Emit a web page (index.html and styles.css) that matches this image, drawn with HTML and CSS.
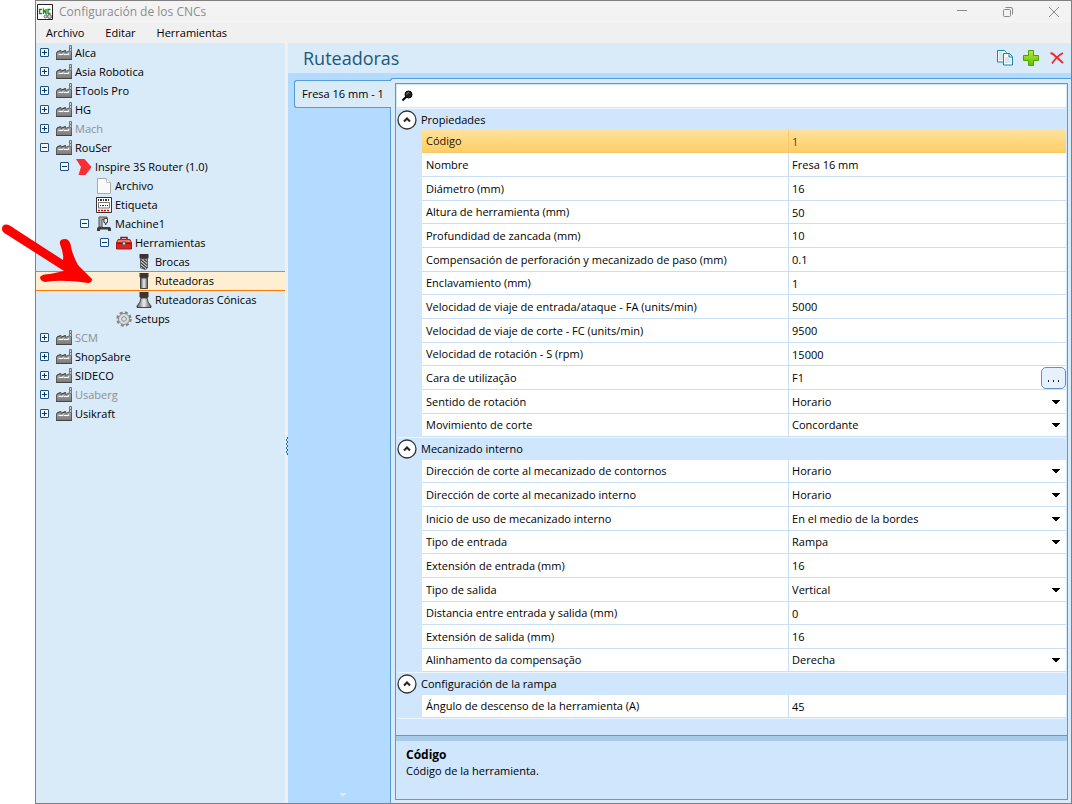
FILE: index.html
```html
<!DOCTYPE html>
<html lang="es">
<head>
<meta charset="utf-8">
<title>Configuración de los CNCs</title>
<link rel="stylesheet" href="styles.css">
</head>
<body>
<svg class="defs" aria-hidden="true">
  <defs>
    <linearGradient id="steel" x1="0" x2="1" y1="0" y2="0"><stop offset="0" stop-color="#555"/><stop offset=".5" stop-color="#eee"/><stop offset="1" stop-color="#555"/></linearGradient>
    <linearGradient id="wall" x1="0" x2="0" y1="0" y2="1"><stop offset="0" stop-color="#aaa"/><stop offset="1" stop-color="#777"/></linearGradient>
    <linearGradient id="green" x1="0" x2="0" y1="0" y2="1"><stop offset="0" stop-color="#b4ea3c"/><stop offset="1" stop-color="#62bd00"/></linearGradient>
    <symbol id="factory" viewBox="0 0 16 16"><path d="M.5 14.500V7.500L5 5.500V7.500L9.500 5.500V7.500L13 6h2.500v8.500z" fill="url(#wall)" stroke="#5a5a5a"/><path d="M13.500.5h2v6h-2z" fill="#ccc" stroke="#777"/><path d="M13 3.500h3" stroke="#777"/><path d="M1 7l3.500-1.500M5.500 7l4-1.500" stroke="#444"/><path d="M2.500 9.500h4l1-1M8 9.500h4l1-1" fill="none" stroke="#fff" stroke-width="1.200"/><path d="M0 14.500h16" stroke="#444"/></symbol>
    <symbol id="chevron" viewBox="0 0 16 16"><path d="M0 0h8.500L15.500 8l-6 8H2.500L5 8z" fill="#fb2c36"/></symbol>
    <symbol id="page" viewBox="0 0 16 16"><path d="M1.500.5h9l4 4v11h-13z" fill="#fafafa" stroke="#aaa"/><path d="M10.500.5v4h4" fill="#fff" stroke="#bbb"/></symbol>
    <symbol id="tag" viewBox="0 0 16 16"><path d="M.5.5h15v15H.5z" fill="#fff" stroke="#333"/><path d="M2 3h12" stroke="#333" stroke-width="2" stroke-dasharray="1 1 2 1"/><path d="M2.500 5.500h11v5.500h-11z" fill="none" stroke="#777"/><path d="M4 8.500h8" stroke="#222" stroke-dasharray="1 1 2 1"/><path d="M2 13.500h12" stroke="#e00" stroke-width="1.500" stroke-dasharray="2 1"/></symbol>
    <symbol id="machine" viewBox="0 0 16 16"><path d="M3 1h8v5H8V3.500H6V11H3z" fill="#aaa" stroke="#555"/><path d="M8 2.500h3.500v4h-1L9.700 9 9 6.500H8z" fill="#eee" stroke="#444"/><path d="M2 11h12l1 1.500V15h-3v-1.500H4V15H1v-2.500z" fill="#3c3c3c"/></symbol>
    <symbol id="toolbox" viewBox="0 0 16 16"><path d="M5 5V2.500h6V5" fill="none" stroke="#8f1515" stroke-width="1.500"/><path d="M2 4.500h12l1.500 3.500H.5z" fill="#f4796b" stroke="#b32020"/><path d="M.5 8h15v6H.5z" fill="#da2424" stroke="#a61616"/><path d="M1 8.500h14" stroke="#811"/><path d="M6.500 7h3v3h-3z" fill="#ddd" stroke="#555"/></symbol>
    <symbol id="drill" viewBox="0 0 16 16"><path d="M3.500 0h9v4l-1 1h-7l-1-1z" fill="#3a3434"/><path d="M4.500 5h7v9l-2 1.500-5-1.500z" fill="#d2d2d2" stroke="#666"/><path d="M5 6l6 5M5 9l6 5M8 5.500l3 2.500M5 12l4 3" stroke="#444" stroke-width="1.300"/></symbol>
    <symbol id="router" viewBox="0 0 16 16"><path d="M3.500 0h9v4l-1 1h-7l-1-1z" fill="#3a3434"/><path d="M4.500 5h7v10.500h-7z" fill="url(#steel)" stroke="#444"/></symbol>
    <symbol id="cone" viewBox="0 0 16 16"><path d="M3.500 0h9v5l-1 1h-7l-1-1z" fill="#3a3434"/><path d="M5 6h6l1 4 3 4v1.500H1V14l3-4z" fill="url(#steel)" stroke="#444"/></symbol>
    <symbol id="gear" viewBox="0 0 16 16"><circle cx="8" cy="8" r="6.500" fill="none" stroke="#858585" stroke-width="2.500" stroke-dasharray="2.900 2.205"/><circle cx="8" cy="8" r="5.500" fill="#ddd" stroke="#8a8a8a"/><circle cx="8" cy="8" r="2.300" fill="#d9eaf8" stroke="#888"/></symbol>
    <symbol id="up" viewBox="0 0 20 20"><circle cx="10" cy="10" r="9" fill="#fff" stroke="#333" stroke-width="1.300"/><path d="M7 11.500l3-3 3 3" fill="none" stroke="#222" stroke-width="2"/></symbol>
  </defs>
</svg>

<div class="window">
  <header class="titlebar">
    <svg class="app-icon" viewBox="0 0 16 16" aria-hidden="true"><path d="M.5.5h15v15H.5z" fill="#fff" stroke="#222"/><path d="M5 5.500H2.500v4H5M6.500 10V5.500l2.500 4V5M13.500 5.500H11v4h2.500" fill="none" stroke="#138a13" stroke-width="1.300"/><circle cx="8.500" cy="12.500" r="1.500" fill="#ccc" stroke="#777"/><circle cx="12.500" cy="12.500" r="2" fill="#ccc" stroke="#666"/></svg>
    <h1>Configuración de los CNCs</h1>
    <div class="caption">
      <button aria-label="Minimizar"><svg viewBox="0 0 12 12"><path d="M1 4.500h10"/></svg></button>
      <button aria-label="Restaurar"><svg viewBox="0 0 12 12"><rect x="1.500" y="3.500" width="7" height="7" rx="1"/><path d="M3.500 1.500H9Q10.500 1.500 10.500 3V8.500"/></svg></button>
      <button aria-label="Cerrar"><svg viewBox="0 0 12 12"><path d="M1 1l10 10M11 1L1 11"/></svg></button>
    </div>
  </header>
  <nav class="menubar"><button>Archivo</button><button>Editar</button><button>Herramientas</button></nav>

  <div class="body">
    <nav class="tree" aria-label="Fabricantes">
      <ul>
        <li class="node"><button class="toggle plus" aria-label="Expandir"></button><svg><use href="#factory"/></svg><a href="#">Alca</a></li>
        <li class="node"><button class="toggle plus" aria-label="Expandir"></button><svg><use href="#factory"/></svg><a href="#">Asia Robotica</a></li>
        <li class="node"><button class="toggle plus" aria-label="Expandir"></button><svg><use href="#factory"/></svg><a href="#">ETools Pro</a></li>
        <li class="node"><button class="toggle plus" aria-label="Expandir"></button><svg><use href="#factory"/></svg><a href="#">HG</a></li>
        <li class="node off"><button class="toggle plus" aria-label="Expandir"></button><svg><use href="#factory"/></svg><a href="#">Mach</a></li>
        <li class="node"><button class="toggle" aria-label="Contraer"></button><svg><use href="#factory"/></svg><a href="#">RouSer</a></li>
        <li class="node l1"><button class="toggle" aria-label="Contraer"></button><svg><use href="#chevron"/></svg><a href="#">Inspire 3S Router (1.0)</a></li>
        <li class="node l2"><span class="toggle-space"></span><svg><use href="#page"/></svg><a href="#">Archivo</a></li>
        <li class="node l2"><span class="toggle-space"></span><svg><use href="#tag"/></svg><a href="#">Etiqueta</a></li>
        <li class="node l2"><button class="toggle" aria-label="Contraer"></button><svg><use href="#machine"/></svg><a href="#">Machine1</a></li>
        <li class="node l3"><button class="toggle" aria-label="Contraer"></button><svg><use href="#toolbox"/></svg><a href="#">Herramientas</a></li>
        <li class="node l4"><span class="toggle-space"></span><svg><use href="#drill"/></svg><a href="#">Brocas</a></li>
        <li class="node l4 selected"><span class="toggle-space"></span><svg><use href="#router"/></svg><a href="#">Ruteadoras</a></li>
        <li class="node l4"><span class="toggle-space"></span><svg><use href="#cone"/></svg><a href="#">Ruteadoras Cónicas</a></li>
        <li class="node l3"><span class="toggle-space"></span><svg><use href="#gear"/></svg><a href="#">Setups</a></li>
        <li class="node off"><button class="toggle plus" aria-label="Expandir"></button><svg><use href="#factory"/></svg><a href="#">SCM</a></li>
        <li class="node"><button class="toggle plus" aria-label="Expandir"></button><svg><use href="#factory"/></svg><a href="#">ShopSabre</a></li>
        <li class="node"><button class="toggle plus" aria-label="Expandir"></button><svg><use href="#factory"/></svg><a href="#">SIDECO</a></li>
        <li class="node off"><button class="toggle plus" aria-label="Expandir"></button><svg><use href="#factory"/></svg><a href="#">Usaberg</a></li>
        <li class="node"><button class="toggle plus" aria-label="Expandir"></button><svg><use href="#factory"/></svg><a href="#">Usikraft</a></li>
      </ul>
    </nav>
    <div class="splitter"><span class="grip"></span></div>

    <main class="content">
      <div class="content-head">
        <h2>Ruteadoras</h2>
        <div class="tools">
          <button aria-label="Copiar"><svg viewBox="0 0 16 16"><path d="M.5.5h7l2 2v9.500h-9z" fill="#fff" stroke="#1583ae"/><path d="M2 3h3M2 5h5M2 7h5M2 9h5" stroke="#a6cede"/><path d="M6.500 3.500h6l3 3v8.500h-9z" fill="#fff" stroke="#1583ae"/><path d="M12 3.500v3.500h3.500" fill="#e4f4fb" stroke="#1583ae"/><path d="M8 8h4M8 10h6M8 12h6" stroke="#a6cede"/></svg></button>
          <button aria-label="Agregar"><svg viewBox="0 0 16 16"><path d="M5.500.5h5v5h5v5h-5v5h-5v-5h-5v-5h5z" fill="url(#green)" stroke="#4fa000"/></svg></button>
          <button aria-label="Eliminar"><svg viewBox="0 0 16 16"><path d="M1.500 3.500q2-.5 3 1 4 3.500 9.500 8.500" fill="none" stroke="#f2262c" stroke-width="2"/><path d="M14 3Q8 6 3 13.500" fill="none" stroke="#f2262c" stroke-width="1.800"/></svg></button>
        </div>
      </div>
      <div class="workspace">
        <div class="tabs">
          <button class="tab">Fresa 16 mm - 1</button>
          <span class="more"></span>
        </div>
        <div class="sheet">
          <div class="panel">
            <div class="search">
              <svg viewBox="0 0 12 12" aria-hidden="true"><circle cx="7.500" cy="4.500" r="3.500" fill="#222" stroke="#000"/><path d="M5.500 4.500q.5-2 2.500-2" stroke="#999" fill="none"/><path d="M5 7L1.500 10.500" stroke="#000" stroke-width="2"/></svg>
              <input type="search" aria-label="Buscar">
            </div>
            <div class="groups">
              <section class="group">
                <h3><button aria-label="Contraer"><svg><use href="#up"/></svg></button>Propiedades</h3>
                <table>
                  <tr class="current"><th><label for="p1">Código</label></th><td><input id="p1" value="1"></td></tr>
                  <tr><th><label for="p2">Nombre</label></th><td><input id="p2" value="Fresa 16 mm"></td></tr>
                  <tr><th><label for="p3">Diámetro (mm)</label></th><td><input id="p3" value="16"></td></tr>
                  <tr><th><label for="p4">Altura de herramienta (mm)</label></th><td><input id="p4" value="50"></td></tr>
                  <tr><th><label for="p5">Profundidad de zancada (mm)</label></th><td><input id="p5" value="10"></td></tr>
                  <tr><th><label for="p6">Compensación de perforación y mecanizado de paso (mm)</label></th><td><input id="p6" value="0.1"></td></tr>
                  <tr><th><label for="p7">Enclavamiento (mm)</label></th><td><input id="p7" value="1"></td></tr>
                  <tr><th><label for="p8">Velocidad de viaje de entrada/ataque - FA (units/min)</label></th><td><input id="p8" value="5000"></td></tr>
                  <tr><th><label for="p9">Velocidad de viaje de corte - FC (units/min)</label></th><td><input id="p9" value="9500"></td></tr>
                  <tr><th><label for="p10">Velocidad de rotación - S (rpm)</label></th><td><input id="p10" value="15000"></td></tr>
                  <tr><th><label for="p11">Cara de utilização</label></th><td><div class="with-button"><input id="p11" value="F1"><button class="dots" aria-label="Elegir cara"><i></i><i></i><i></i></button></div></td></tr>
                  <tr><th><label for="p12">Sentido de rotación</label></th><td><select id="p12"><option>Horario</option></select></td></tr>
                  <tr><th><label for="p13">Movimiento de corte</label></th><td><select id="p13"><option>Concordante</option></select></td></tr>
                </table>
              </section>
              <section class="group">
                <h3><button aria-label="Contraer"><svg><use href="#up"/></svg></button>Mecanizado interno</h3>
                <table>
                  <tr><th><label for="m1">Dirección de corte al mecanizado de contornos</label></th><td><select id="m1"><option>Horario</option></select></td></tr>
                  <tr><th><label for="m2">Dirección de corte al mecanizado interno</label></th><td><select id="m2"><option>Horario</option></select></td></tr>
                  <tr><th><label for="m3">Inicio de uso de mecanizado interno</label></th><td><select id="m3"><option>En el medio de la bordes</option></select></td></tr>
                  <tr><th><label for="m4">Tipo de entrada</label></th><td><select id="m4"><option>Rampa</option></select></td></tr>
                  <tr><th><label for="m5">Extensión de entrada (mm)</label></th><td><input id="m5" value="16"></td></tr>
                  <tr><th><label for="m6">Tipo de salida</label></th><td><select id="m6"><option>Vertical</option></select></td></tr>
                  <tr><th><label for="m7">Distancia entre entrada y salida (mm)</label></th><td><input id="m7" value="0"></td></tr>
                  <tr><th><label for="m8">Extensión de salida (mm)</label></th><td><input id="m8" value="16"></td></tr>
                  <tr><th><label for="m9">Alinhamento da compensação</label></th><td><select id="m9"><option>Derecha</option></select></td></tr>
                </table>
              </section>
              <section class="group">
                <h3><button aria-label="Contraer"><svg><use href="#up"/></svg></button>Configuración de la rampa</h3>
                <table>
                  <tr><th><label for="r1">Ángulo de descenso de la herramienta (A)</label></th><td><input id="r1" value="45"></td></tr>
                </table>
              </section>
            </div>
            <footer class="help">
              <h4>Código</h4>
              <p>Código de la herramienta.</p>
            </footer>
          </div>
        </div>
      </div>
    </main>
  </div>
</div>
<svg class="pointer" viewBox="0 0 96 72" aria-hidden="true"><path d="M2 6Q2 1 7 1.500Q10 2 15 6L63 37Q64 31 60 21Q59 16 65 16Q70 16 71 24Q73 33 78 42L92 56Q92 60 88 60Q62 56 45 59Q40 58 40 54Q42 51 50 51L64 48L6 11Q2 9 2 6Z" fill="#fe0000"/></svg>
</body>
</html>
```
FILE: styles.css
```css
* { box-sizing: border-box; }
body { margin: 0; background: #fff; color: #000; font: 11px/16px "Open Sans", "Noto Sans", sans-serif; }
h1, h2, h3, h4, p, ul { margin: 0; padding: 0; font-weight: normal; }
button, input, select { margin: 0; padding: 0; border: 0; background: none; color: inherit; font: inherit; }
svg { display: block; flex: none; }
.defs { position: absolute; width: 0; height: 0; }

.window { display: flex; flex-direction: column; height: 100vh; margin-left: 35px; border: 1px solid #808080; background: #f0f0f0; }

.titlebar { display: flex; align-items: center; height: 22px; background: #f3f3f3; }
.app-icon { width: 16px; height: 16px; margin: 0 6px 0 1px; }
.titlebar h1 { flex: 1; color: #8c8c8c; font-size: 12px; }
.caption { display: flex; padding-right: 11px; gap: 34px; }
.caption svg { width: 12px; height: 12px; fill: none; stroke: #8a8a8a; }

.menubar { display: flex; align-items: center; gap: 21px; height: 20px; padding-left: 10px; }

.body { display: flex; flex: 1; min-height: 0; }
.tree { flex: none; width: 249px; background: #d9eaf8; }
.tree ul { list-style: none; }
.node { display: flex; align-items: center; height: 19px; padding-left: 4px; }
.node svg { width: 16px; height: 16px; margin-right: 3px; }
.node a { color: #000; text-decoration: none; }
.node.off a { color: #8b8f94; }
.l1 { padding-left: 24px; }
.l2 { padding-left: 44px; }
.l3 { padding-left: 64px; }
.l4 { padding-left: 84px; }
.selected { height: 20px; margin-bottom: -1px; border: solid #ff7b00; border-width: 1px 0; background: #ffefd2; }
.toggle { width: 9px; height: 9px; margin-right: 7px; border: 1px solid #1c4f82; border-radius: 1px; background: linear-gradient(#0a3a6c, #0a3a6c) center / 5px 1px no-repeat #f2f8fe; }
.toggle.plus { background: linear-gradient(#0a3a6c, #0a3a6c) center / 5px 1px no-repeat, linear-gradient(#0a3a6c, #0a3a6c) center / 1px 5px no-repeat #f2f8fe; }
.toggle-space { width: 9px; margin-right: 7px; }

.splitter { display: flex; flex: none; align-items: center; justify-content: flex-end; width: 3px; padding-top: 46px; }
.grip { width: 2px; height: 18px; background: conic-gradient(#1c5da8 25%, transparent 0 50%, #1c5da8 0 75%, transparent 0) 0 0 / 2px 4px; }

.content { display: flex; flex: 1; flex-direction: column; min-width: 0; background: #b3dbff; }
.content-head { display: flex; flex: none; align-items: center; justify-content: space-between; height: 30px; padding: 0 6px 0 15px; background: #d9eaf8; }
.content h2 { color: #1b587c; font-size: 18px; line-height: 24px; }
.tools { display: flex; gap: 10px; }
.tools svg { width: 16px; height: 16px; }

.workspace { display: flex; flex: 1; min-height: 0; padding: 5px 0 0 6px; }
.tabs { z-index: 1; display: flex; flex: none; flex-direction: column; align-items: stretch; width: 97px; margin-right: -1px; padding-top: 2px; }
.tab { height: 28px; padding-left: 7px; border: 1px solid #559bd8; border-right: 0; border-radius: 3px 0 0 3px; background: #d9eaf8; text-align: left; }
.more { align-self: center; margin: auto 0 6px; border: solid transparent; border-width: 4px 4px 0; border-top-color: #d9eaf8; }
.sheet { display: flex; flex: 1; min-width: 0; padding: 4px 3px 3px 4px; border: solid #559bd8; border-width: 1px 0 0 1px; border-radius: 3px 0 0 0; background: #d9eaf8; }
.panel { display: flex; flex: 1; flex-direction: column; min-width: 0; border: 1px solid #559bd8; background: #cfe6fd; }

.search { display: flex; flex: none; align-items: center; height: 22px; margin: 1px 1px 0; padding-left: 4px; background: #fff; }
.search svg { width: 12px; height: 12px; }
.search input { flex: 1; height: 20px; margin-left: 4px; outline: 0; }

.groups { flex: 1; min-height: 0; padding: 1px 1px 0; }
.group { border-bottom: 1px solid #edf6ff; border-radius: 3px; }
.group h3 { display: flex; align-items: center; gap: 4px; height: 22px; border-top: 1px solid #edf6ff; border-radius: 3px 3px 0 0; font-size: 11px; }
.group + .group { margin-top: -1px; }
.group + .group h3 { height: 23px; }
.group h3 svg { width: 20px; height: 20px; }
.group table { width: calc(100% - 25px); margin-left: 25px; border-spacing: 0; table-layout: fixed; background: #fff; }
.group tr { height: 24px; }
.group tr:nth-child(3n + 1) { height: 23px; }
.group + .group tr:nth-child(9) { height: 23px; }
.group th, .group td { padding: 0; border-bottom: 1px solid #c8dff5; font-weight: normal; text-align: left; }
.group th { width: 57%; padding-left: 4px; border-right: 1px solid #c8dff5; white-space: nowrap; }
.group td { padding-left: 3px; }
.group label { display: block; height: 18px; line-height: 18px; }
.group td input, .group td select { display: block; width: 100%; height: 18px; outline: 0; }
.group td select { appearance: none; background: conic-gradient(from -45deg at 50% 100%, #000 90deg, transparent 0) right 6px center / 8px 4px no-repeat; }
.current { background: linear-gradient(#ffe29c, #ffcd63); color: #7d3200; }
.current th { color: #1f1400; }
.current th, .group .current td { border-color: #f6ca6c; }
.with-button { display: flex; align-items: center; height: 22px; }
.dots { display: flex; flex: none; align-items: flex-end; justify-content: center; gap: 4px; width: 25px; height: 22px; padding-bottom: 6px; border: 1px solid #5a92cb; border-radius: 5px; background: #e6f1fd; }
.dots i { width: 1px; height: 2px; background: #123; }

.help { flex: none; height: 64px; padding: 11px 10px 0; border-top: 1px solid #559bd8; box-shadow: inset 0 5px #a8cbea; }
.help h4 { font-size: 12px; font-weight: bold; }

.pointer { position: absolute; top: 223px; left: 0; width: 96px; height: 72px; }
```
